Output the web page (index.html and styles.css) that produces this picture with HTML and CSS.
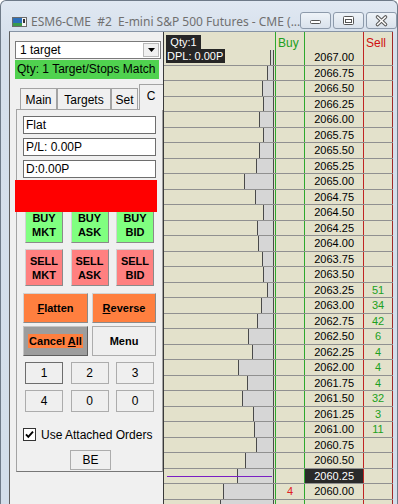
FILE: index.html
```html
<!DOCTYPE html>
<html lang="en">
<head>
    <meta charset="UTF-8">
    <title>ESM6-CME #2 E-mini S&amp;P 500 Futures - CME</title>
    <link rel="stylesheet" href="styles.css">
</head>
<body>

<div class="window">
    <!-- Title bar -->
    <div class="titlebar">
        <svg class="app-icon" width="15" height="10" viewBox="0 0 15 10">
            <rect x="0.5" y="0.5" width="14" height="9" fill="#f4f4f4" stroke="#6b6b6b"/>
            <rect x="1" y="1" width="9" height="5" fill="#2d6fb8"/>
            <rect x="1" y="6" width="9" height="3" fill="#3c9a4a"/>
            <rect x="11" y="2" width="2" height="4" fill="#333"/>
        </svg>
        <span class="title">ESM6-CME&nbsp; #2&nbsp; E-mini S&amp;P 500 Futures - CME (...</span>
        <div class="caption">
            <span class="cap-btn">
                <svg width="31" height="17" viewBox="0 0 31 17"><rect x="10.5" y="8.5" width="10" height="3" rx="1" fill="#fff" stroke="#555"/></svg>
            </span>
            <span class="cap-btn">
                <svg width="31" height="17" viewBox="0 0 31 17"><rect x="10.5" y="4.5" width="10" height="8" rx="1" fill="#fff" stroke="#555"/><rect x="12.5" y="7.5" width="6" height="3" fill="none" stroke="#555"/></svg>
            </span>
            <span class="cap-btn">
                <svg width="31" height="17" viewBox="0 0 31 17"><path d="M11.5 5 L19.5 12.5 M19.5 5 L11.5 12.5" stroke="#5a5a5a" stroke-width="3.6" stroke-linecap="round"/><path d="M11.5 5 L19.5 12.5 M19.5 5 L11.5 12.5" stroke="#fff" stroke-width="1.5" stroke-linecap="round"/></svg>
            </span>
        </div>
    </div>

    <div class="client">
        <!-- Order entry side panel -->
        <div class="side">
            <div class="combo">
                <span class="combo-text">1 target</span>
                <span class="combo-btn"><svg width="7" height="4" viewBox="0 0 7 4"><path d="M0 0 H7 L3.5 4 Z" fill="#000"/></svg></span>
            </div>
            <div class="match">Qty: 1 Target/Stops Match</div>

            <div class="tabs">
                <span class="tab tab-main">Main</span>
                <span class="tab tab-targets">Targets</span>
                <span class="tab tab-set">Set</span>
                <span class="tab tab-c active">C</span>
            </div>

            <div class="tab-body">
                <div class="field">Flat</div>
                <div class="field">P/L: 0.00P</div>
                <div class="field">D:0.00P</div>
                <div class="alert"></div>

                <div class="order-grid">
                    <button class="btn btn-buy">BUY<br>MKT</button>
                    <button class="btn btn-buy">BUY<br>ASK</button>
                    <button class="btn btn-buy">BUY<br>BID</button>
                    <button class="btn btn-sell">SELL<br>MKT</button>
                    <button class="btn btn-sell">SELL<br>ASK</button>
                    <button class="btn btn-sell">SELL<br>BID</button>
                </div>

                <div class="action-grid">
                    <button class="btn btn-orange"><u>F</u>latten</button>
                    <button class="btn btn-orange"><u>R</u>everse</button>
                    <button class="btn btn-cancel"><span>Cancel <u>A</u>ll</span></button>
                    <button class="btn btn-plain bold">Menu</button>
                </div>

                <div class="num-grid">
                    <button class="btn btn-plain focus">1</button>
                    <button class="btn btn-plain">2</button>
                    <button class="btn btn-plain">3</button>
                    <button class="btn btn-plain">4</button>
                    <button class="btn btn-plain">0</button>
                    <button class="btn btn-plain">0</button>
                </div>

                <div class="check">
                    <svg width="13" height="13" viewBox="0 0 13 13">
                        <rect x="0.5" y="0.5" width="12" height="12" fill="#fff" stroke="#333"/>
                        <path d="M3 6.3 L5.3 8.8 L10 3.6" fill="none" stroke="#000" stroke-width="1.9"/>
                    </svg>
                    <span>Use Attached Orders</span>
                </div>

                <button class="btn btn-plain be">BE</button>
            </div>
        </div>

        <!-- Price ladder -->
        <div class="ladder">
            <div class="lrow head"><div class="vol"></div><div class="c-buy">Buy</div><div class="c-price"></div><div class="c-sell">Sell</div></div>

            <div class="lrow"><div class="vol"><span class="bar" style="width:4px"></span></div><div class="c-buy"></div><div class="c-price">2067.00</div><div class="c-sell"></div></div>
            <div class="lrow"><div class="vol"><span class="bar" style="width:7px"></span></div><div class="c-buy"></div><div class="c-price">2066.75</div><div class="c-sell"></div></div>
            <div class="lrow"><div class="vol"><span class="bar" style="width:12px"></span></div><div class="c-buy"></div><div class="c-price">2066.50</div><div class="c-sell"></div></div>
            <div class="lrow"><div class="vol"><span class="bar" style="width:11px"></span></div><div class="c-buy"></div><div class="c-price">2066.25</div><div class="c-sell"></div></div>
            <div class="lrow"><div class="vol"><span class="bar" style="width:15px"></span></div><div class="c-buy"></div><div class="c-price">2066.00</div><div class="c-sell"></div></div>
            <div class="lrow"><div class="vol"><span class="bar" style="width:11px"></span></div><div class="c-buy"></div><div class="c-price">2065.75</div><div class="c-sell"></div></div>
            <div class="lrow"><div class="vol"><span class="bar" style="width:15px"></span></div><div class="c-buy"></div><div class="c-price">2065.50</div><div class="c-sell"></div></div>
            <div class="lrow"><div class="vol"><span class="bar" style="width:18px"></span></div><div class="c-buy"></div><div class="c-price">2065.25</div><div class="c-sell"></div></div>
            <div class="lrow"><div class="vol"><span class="bar" style="width:30px"></span></div><div class="c-buy"></div><div class="c-price">2065.00</div><div class="c-sell"></div></div>
            <div class="lrow"><div class="vol"><span class="bar" style="width:19px"></span></div><div class="c-buy"></div><div class="c-price">2064.75</div><div class="c-sell"></div></div>
            <div class="lrow"><div class="vol"><span class="bar" style="width:11px"></span></div><div class="c-buy"></div><div class="c-price">2064.50</div><div class="c-sell"></div></div>
            <div class="lrow"><div class="vol"><span class="bar" style="width:17px"></span></div><div class="c-buy"></div><div class="c-price">2064.25</div><div class="c-sell"></div></div>
            <div class="lrow"><div class="vol"><span class="bar" style="width:16px"></span></div><div class="c-buy"></div><div class="c-price">2064.00</div><div class="c-sell"></div></div>
            <div class="lrow"><div class="vol"><span class="bar" style="width:12px"></span></div><div class="c-buy"></div><div class="c-price">2063.75</div><div class="c-sell"></div></div>
            <div class="lrow"><div class="vol"><span class="bar" style="width:11px"></span></div><div class="c-buy"></div><div class="c-price">2063.50</div><div class="c-sell"></div></div>
            <div class="lrow"><div class="vol"><span class="bar" style="width:7px"></span></div><div class="c-buy"></div><div class="c-price">2063.25</div><div class="c-sell">51</div></div>
            <div class="lrow"><div class="vol"><span class="bar" style="width:13px"></span></div><div class="c-buy"></div><div class="c-price">2063.00</div><div class="c-sell">34</div></div>
            <div class="lrow"><div class="vol"><span class="bar" style="width:17px"></span></div><div class="c-buy"></div><div class="c-price">2062.75</div><div class="c-sell">42</div></div>
            <div class="lrow"><div class="vol"><span class="bar" style="width:26px"></span></div><div class="c-buy"></div><div class="c-price">2062.50</div><div class="c-sell">6</div></div>
            <div class="lrow"><div class="vol"><span class="bar" style="width:22px"></span></div><div class="c-buy"></div><div class="c-price">2062.25</div><div class="c-sell">4</div></div>
            <div class="lrow"><div class="vol"><span class="bar" style="width:36px"></span></div><div class="c-buy"></div><div class="c-price">2062.00</div><div class="c-sell">4</div></div>
            <div class="lrow"><div class="vol"><span class="bar" style="width:27px"></span></div><div class="c-buy"></div><div class="c-price">2061.75</div><div class="c-sell">4</div></div>
            <div class="lrow"><div class="vol"><span class="bar" style="width:32px"></span></div><div class="c-buy"></div><div class="c-price">2061.50</div><div class="c-sell">32</div></div>
            <div class="lrow"><div class="vol"><span class="bar" style="width:21px"></span></div><div class="c-buy"></div><div class="c-price">2061.25</div><div class="c-sell">3</div></div>
            <div class="lrow"><div class="vol"><span class="bar" style="width:20px"></span></div><div class="c-buy"></div><div class="c-price">2061.00</div><div class="c-sell">11</div></div>
            <div class="lrow"><div class="vol"><span class="bar" style="width:18px"></span></div><div class="c-buy"></div><div class="c-price">2060.75</div><div class="c-sell"></div></div>
            <div class="lrow"><div class="vol"><span class="bar" style="width:29px"></span></div><div class="c-buy"></div><div class="c-price">2060.50</div><div class="c-sell"></div></div>
            <div class="lrow"><div class="vol marked"><span class="bar" style="width:37px"></span><span class="last-line"></span></div><div class="c-buy"></div><div class="c-price last">2060.25</div><div class="c-sell"></div></div>
            <div class="lrow"><div class="vol"><span class="bar" style="width:51px"></span></div><div class="c-buy">4</div><div class="c-price">2060.00</div><div class="c-sell"></div></div>
            <div class="lrow"><div class="vol"><span class="bar" style="width:54px"></span></div><div class="c-buy"></div><div class="c-price"></div><div class="c-sell"></div></div>

            <div class="qty-tag">
                <span class="qty">Qty:1</span>
                <span class="dpl">DPL: 0.00P</span>
            </div>
        </div>
    </div>
</div>

</body>
</html>
```

FILE: styles.css
```css
body {
    margin: 0;
    width: 398px;
    height: 504px;
    overflow: hidden;
    font-family: "Liberation Sans", Arial, sans-serif;
    font-size: 12px;
    color: #000;
    background: #fff;
}

/* Window frame */
.window {
    height: 504px;
    box-sizing: border-box;
    padding: 0 4px 0 8px;
    border: 1px solid #6e7a88;
    border-bottom: none;
    border-radius: 6px 6px 0 0;
    background: linear-gradient(#e0e8f2, #d5dfeb 40px, #d3deea);
}

.titlebar {
    height: 30px;
    display: flex;
    align-items: flex-start;
}
.app-icon {
    margin: 16px 0 0 3px;
    flex: none;
}
.title {
    margin: 13px 0 0 4px;
    font-family: "Noto Sans", "Open Sans", sans-serif;
    font-size: 12px;
    line-height: 16px;
    color: #707070;
    white-space: nowrap;
}
.caption {
    margin: 11px 0 0 auto;
    display: flex;
    gap: 2px;
}
.cap-btn {
    width: 31px;
    height: 17px;
    box-sizing: border-box;
    border: 1px solid #8d9aab;
    border-radius: 3px;
    background: linear-gradient(#eef3f8, #dae2ec);
    display: flex;
    align-items: center;
    justify-content: center;
    overflow: hidden;
}
.cap-btn svg {
    flex: none;
}

/* Client area */
.client {
    display: flex;
    height: 473px;
    border-top: 1px solid #8794a5;
    border-left: 1px solid #5f5f5f;
    background: #f0f0f0;
}

.side {
    width: 153px;
    flex: none;
    box-sizing: border-box;
    padding: 9px 0 0 5px;
    overflow: hidden;
}

.combo {
    width: 146px;
    height: 18px;
    box-sizing: border-box;
    border: 1px solid #7a7a7a;
    background: #fff;
    display: flex;
    align-items: center;
}
.combo-text {
    flex: 1;
    padding-left: 4px;
}
.combo-btn {
    width: 16px;
    height: 14px;
    margin-right: 1px;
    box-sizing: border-box;
    border: 1px solid #b9b9b9;
    background: #f0f0f0;
    display: flex;
    align-items: center;
    justify-content: center;
}

.match {
    margin-top: 1px;
    width: 144px;
    height: 19px;
    box-sizing: border-box;
    padding-left: 2px;
    line-height: 19px;
    background: #50d24f;
    white-space: nowrap;
}

/* Tabs */
.tabs {
    display: flex;
    align-items: flex-end;
    height: 25px;
    margin: 5px 0 0 5px;
}
.tab {
    flex: none;
    height: 21px;
    box-sizing: border-box;
    border: 1px solid #a3a3a3;
    border-bottom: none;
    background: #f0f0f0;
    display: flex;
    align-items: center;
    justify-content: center;
    padding-top: 1px;
}
.tab-main { width: 37px; }
.tab-targets { width: 54px; }
.tab-set { width: 27px; }
.tab-c {
    width: 30px;
    margin-left: 1px;
}
.tab.active {
    height: 26px;
    margin-bottom: -1px;
    padding: 0 6px 4px 0;
    position: relative;
    z-index: 2;
}

.tab-body {
    position: relative;
    margin-left: 1px;
    width: 147px;
    height: 363px;
    box-sizing: border-box;
    padding: 6px 6px 0 6px;
    border: 1px solid #a3a3a3;
    border-bottom-color: #777;
}

.field {
    height: 18px;
    box-sizing: border-box;
    margin-bottom: 4px;
    padding-left: 2px;
    line-height: 16px;
    border: 1px solid #6e6e6e;
    background: #fff;
}

.alert {
    position: absolute;
    left: -2px;
    top: 70px;
    width: 142px;
    height: 32px;
    background: #ff0000;
    z-index: 1;
}

/* Buttons */
.btn {
    font-family: inherit;
    font-size: 12px;
    padding: 0;
    margin: 0;
    color: #000;
    box-sizing: border-box;
    border: 1px solid;
    border-color: #d2d2d2 #8a8a8a #8a8a8a #d2d2d2;
}
.btn-buy, .btn-sell {
    font-size: 11px;
    font-weight: bold;
    line-height: 14px;
}
.btn-buy { background: #80ff80; }
.btn-sell { background: #ff8080; }
.btn-orange {
    background: #ff7f3f;
    font-size: 11px;
    font-weight: bold;
}
.btn-cancel {
    background: #9d9d9d;
    border-color: #c4c4c4 #5f5f5f #5f5f5f #c4c4c4;
    font-size: 11px;
    font-weight: bold;
}
.btn-cancel span {
    background: #ff7f3f;
    padding: 1px 1px;
}
.btn-plain {
    background: #efefef;
    border: 1px solid #acacac;
}
.btn-plain.focus {
    border-color: #6d6d6d;
}
.bold {
    font-size: 11px;
    font-weight: bold;
}

.order-grid {
    margin: 28px 0 0 2px;
    display: grid;
    grid-template-columns: repeat(3, 38px);
    grid-auto-rows: 37px;
    column-gap: 7.5px;
    row-gap: 6px;
}

.action-grid {
    margin-top: 7px;
    display: grid;
    grid-template-columns: 65px 64px;
    grid-auto-rows: 30px;
    column-gap: 4px;
    row-gap: 3px;
}

.num-grid {
    margin: 6px 0 0 2px;
    display: grid;
    grid-template-columns: repeat(3, 38px);
    grid-auto-rows: 22px;
    column-gap: 7.5px;
    row-gap: 6px;
}

.check {
    margin-top: 16px;
    height: 13px;
    display: flex;
    align-items: center;
    gap: 5px;
    white-space: nowrap;
}

.be {
    display: block;
    margin: 9px 0 0 47px;
    width: 41px;
    height: 20px;
}

/* Price ladder */
.ladder {
    position: relative;
    width: 230px;
    flex: none;
    box-sizing: border-box;
    border-left: 1px solid #3a3a3a;
    background: #e3e1cb;
    overflow: hidden;
    font-size: 11px;
}

.lrow {
    display: grid;
    grid-template-columns: 111px 29px 59px 30px;
    height: 15.5px;
    box-sizing: border-box;
    border-bottom: 1px solid #909090;
    line-height: 14px;
}
.lrow.head {
    height: 18px;
    border-bottom: none;
    font-size: 12px;
    line-height: 14px;
}
.lrow > div {
    box-sizing: border-box;
    height: 100%;
}

.vol {
    display: flex;
    justify-content: flex-end;
    padding-right: 1px;
}
.bar {
    height: 100%;
    box-sizing: border-box;
    background: #d6d6d6;
    border-left: 1px solid #4a4a4a;
    border-right: 1px solid #4a4a4a;
}

.c-buy {
    border-left: 1px solid #2ea82e;
    text-align: center;
    color: #e02020;
}
.c-price {
    border-left: 1px solid #2ea82e;
    text-align: right;
    padding-right: 9px;
}
.c-sell {
    border-left: 1px solid #c02424;
    border-right: 1px solid #a02828;
    text-align: center;
    color: #20a020;
}
.head .c-buy {
    color: #20a020;
    text-align: left;
    padding: 4px 0 0 2px;
}
.head .c-sell {
    color: #d01010;
    text-align: left;
    padding: 4px 0 0 2px;
}

.c-price.last {
    background: #2a2a2a;
    color: #fff;
}

.marked {
    position: relative;
}
.last-line {
    position: absolute;
    left: 3px;
    right: 3px;
    top: 7px;
    height: 1px;
    background: #7a1fc4;
}

.qty-tag {
    position: absolute;
    left: 2px;
    top: 3px;
    display: flex;
    flex-direction: column;
    align-items: flex-start;
    color: #fff;
    font-size: 11px;
    line-height: 14px;
    white-space: nowrap;
}
.qty {
    width: 35px;
    text-align: center;
    background: #262626;
}
.dpl {
    padding: 0 2px 0 1px;
    background: #262626;
}
```
